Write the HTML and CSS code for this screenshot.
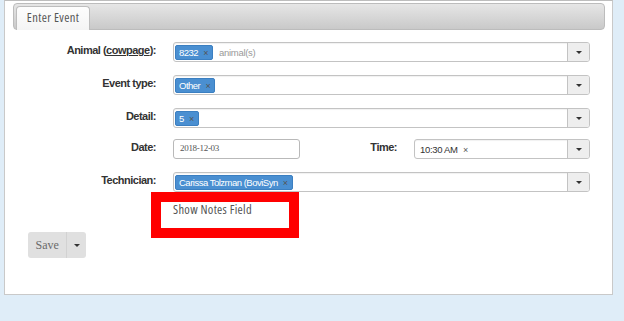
FILE: index.html
```html
<!DOCTYPE html>
<html lang="en">
<head>
    <meta charset="UTF-8">
    <title>Enter Event</title>
    <link rel="stylesheet" href="styles.css">
</head>
<body>
    <div class="panel">
        <div class="tab-bar">
            <div class="tab">Enter Event</div>
        </div>

        <div class="form">
            <div class="row">
                <label class="label">Animal (<u>cowpage</u>):</label>
                <div class="select">
                    <div class="select-body">
                        <span class="tag">8232 <i>×</i></span>
                        <span class="placeholder">animal(s)</span>
                    </div>
                    <div class="drop"><span class="caret"></span></div>
                </div>
            </div>
            <div class="row">
                <label class="label">Event type:</label>
                <div class="select">
                    <div class="select-body">
                        <span class="tag">Other <i>×</i></span>
                    </div>
                    <div class="drop"><span class="caret"></span></div>
                </div>
            </div>
            <div class="row row-tight">
                <label class="label">Detail:</label>
                <div class="select">
                    <div class="select-body">
                        <span class="tag">5 <i>×</i></span>
                    </div>
                    <div class="drop"><span class="caret"></span></div>
                </div>
            </div>
            <div class="row">
                <label class="label">Date:</label>
                <div class="split">
                    <div class="date-input">2018-12-03</div>
                    <label class="label time-label">Time:</label>
                    <div class="select time-select">
                        <div class="select-body">
                            <span class="plain">10:30 AM <i>×</i></span>
                        </div>
                        <div class="drop"><span class="caret"></span></div>
                    </div>
                </div>
            </div>
            <div class="row">
                <label class="label">Technician:</label>
                <div class="select">
                    <div class="select-body">
                        <span class="tag">Carissa Tolzman (BoviSyn <i>×</i></span>
                    </div>
                    <div class="drop"><span class="caret"></span></div>
                </div>
            </div>
        </div>

        <div class="notes">Show Notes Field</div>

        <div class="btn-group">
            <div class="btn">Save</div>
            <div class="btn btn-caret"><span class="caret"></span></div>
        </div>
    </div>

    <!-- highlight -->
    <div class="highlight"></div>
</body>
</html>
```

FILE: styles.css
```css
body, html {
    margin: 0;
    padding: 0;
    height: 100%;
    background-color: #dfedf8;
    font-family: 'Liberation Sans', Arial, sans-serif;
    overflow: hidden;
}
.panel {
    margin-left: 4px;
    width: 609px;
    box-sizing: border-box;
    background-color: #fff;
    border: 1px solid #c9c9c9;
    border-top-color: #bdbdbd;
    padding: 0 7px 37px 0;
    height: 295px;
}
.tab-bar {
    margin: 2px 0 0 8px;
    height: 27px;
    box-sizing: border-box;
    border: 1px solid #bcbcbc;
    border-radius: 4px;
    background: linear-gradient(#e6e6e6, #c9c9c9);
    padding: 2px 0 0 2px;
    display: flex;
    align-items: flex-end;
}
.tab {
    width: 74px;
    height: 24px;
    box-sizing: border-box;
    margin-bottom: -1px;
    border: 1px solid #bdbdbd;
    border-bottom: none;
    border-radius: 4px 4px 0 0;
    background: linear-gradient(#fdfdfd, #f4f4f4);
    font-family: 'Open Sans', sans-serif;
    font-stretch: condensed;
    font-size: 12.5px;
    letter-spacing: 0.35px;
    color: #555;
    text-align: center;
    line-height: 22px;
}
.form {
    margin-top: 12px;
    display: flex;
    flex-direction: column;
}
.row {
    display: flex;
    gap: 17px;
    margin-bottom: 13px;
    height: 20px;
}
.row-tight {
    margin-bottom: 11px;
}
.label {
    width: 151px;
    flex-shrink: 0;
    text-align: right;
    font-size: 11px;
    letter-spacing: -0.5px;
    font-weight: bold;
    color: #333;
    line-height: 16px;
}
.label u {
    text-decoration-thickness: 1px;
}
.select {
    width: 417px;
    height: 20px;
    box-sizing: border-box;
    border: 1px solid #c3c3c3;
    border-radius: 3px;
    box-shadow: inset 0 1px 1px rgba(0, 0, 0, 0.06);
    display: flex;
    background-color: #fff;
}
.select-body {
    flex: 1;
    display: flex;
    align-items: center;
    padding-left: 1px;
    gap: 6px;
}
.drop {
    width: 21px;
    border-left: 1px solid #c3c3c3;
    background-color: #eee;
    border-radius: 0 2px 2px 0;
    display: flex;
    justify-content: center;
    align-items: center;
}
.caret {
    width: 0;
    height: 0;
    border-left: 3px solid transparent;
    border-right: 3px solid transparent;
    border-top: 3px solid #333;
}
.tag {
    background-color: #4a8fd1;
    border: 1px solid #3b7fc1;
    border-radius: 2px;
    color: #fff;
    font-size: 9.5px;
    letter-spacing: -0.5px;
    height: 15px;
    line-height: 14px;
    box-sizing: border-box;
    padding: 0 4px 0 3px;
    white-space: nowrap;
}
.tag i, .plain i {
    font-style: normal;
    color: #555;
    font-size: 9px;
    margin-left: 3px;
}
.placeholder {
    color: #999;
    font-size: 9.5px;
    letter-spacing: -0.3px;
}
.plain {
    font-size: 9.5px;
    letter-spacing: -0.3px;
    color: #333;
    padding-left: 4px;
}
.split {
    width: 417px;
    display: flex;
    gap: 17px;
}
.date-input {
    width: 127px;
    flex-shrink: 0;
    height: 20px;
    box-sizing: border-box;
    border: 1px solid #b9b9b9;
    border-radius: 3px;
    font-family: 'Liberation Serif', serif;
    font-size: 9px;
    letter-spacing: -0.3px;
    color: #555;
    padding-left: 6px;
    line-height: 17px;
}
.time-label {
    width: auto;
    flex: 1;
}
.time-select {
    width: 176px;
    flex-shrink: 0;
}
.notes {
    margin: -3px 0 0 168px;
    font-family: 'Open Sans', sans-serif;
    font-stretch: condensed;
    font-size: 12.5px;
    letter-spacing: 0.3px;
    color: #555;
    line-height: 16px;
}
.btn-group {
    margin: 14px 0 0 23px;
    display: flex;
    width: 58px;
    height: 26px;
    border-radius: 3px;
    background-color: #e0e0e0;
}
.btn {
    width: 39px;
    font-family: 'Liberation Serif', serif;
    font-size: 12px;
    color: #6a6a6a;
    text-align: center;
    line-height: 26px;
}
.btn-caret {
    width: 19px;
    border-left: 1px solid #d2d2d2;
    display: flex;
    justify-content: center;
    align-items: center;
}
.highlight {
    position: absolute;
    left: 151px;
    top: 192px;
    width: 148px;
    height: 46px;
    box-sizing: border-box;
    border: 10px solid #ff0000;
}
```
